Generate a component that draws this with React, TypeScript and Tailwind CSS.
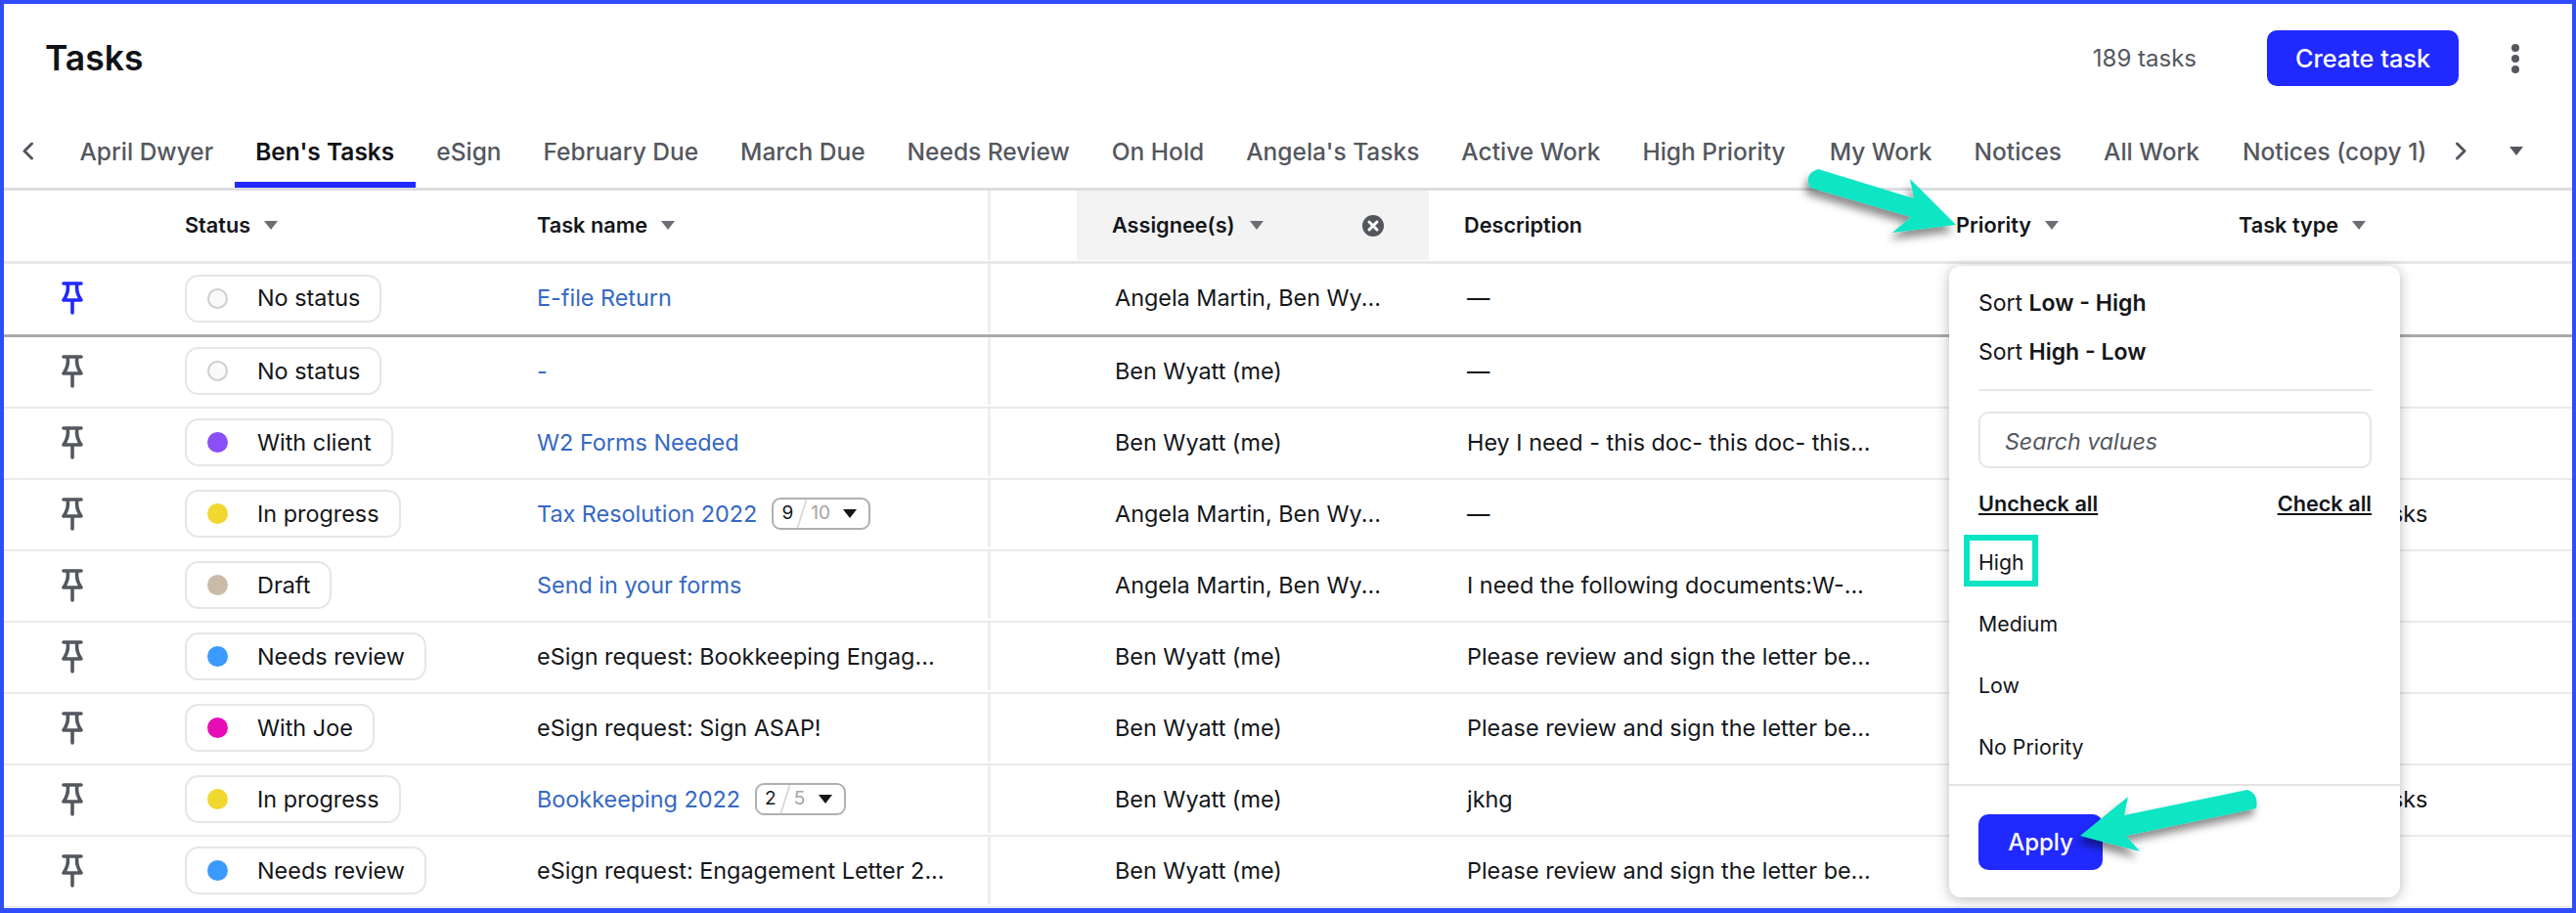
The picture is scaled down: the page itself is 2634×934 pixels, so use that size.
import React from "react";

const COLS = "grid grid-cols-[185px_360px_464px_88px_360px_503px_289px_1fr]";

function Caret({ className = "" }: { className?: string }) {
  return (
    <svg width="14" height="9" viewBox="0 0 14 9" className={`shrink-0 ${className}`}>
      <path d="M0 0H14L7 9Z" fill="currentColor" />
    </svg>
  );
}

function Pin({ blue }: { blue?: boolean }) {
  return (
    <svg width="22" height="34" viewBox="0 0 22 34" fill="none" stroke={blue ? "#2029ff" : "#54575e"} strokeWidth="3.6" strokeLinecap="round" strokeLinejoin="round">
      <path d="M2 2H20M6 2C7 7 6.5 13 2 19H20C15.5 13 15 7 16 2M11 19V32" />
    </svg>
  );
}

function Status({ label, color }: { label: string; color?: string }) {
  return (
    <div className="flex h-[49px] w-fit items-center gap-[30px] rounded-[14px] border-2 border-[#e6e6e6] pl-[21px] pr-[20px]">
      {color ? (
        <span className="h-[21px] w-[21px] rounded-full" style={{ backgroundColor: color }} />
      ) : (
        <span className="h-[21px] w-[21px] rounded-full border-2 border-[#cfcfcf] bg-[#fafafa]" />
      )}
      <span className="text-[23.4px] text-[#14161a]">{label}</span>
    </div>
  );
}

function Progress({ done, total, w }: { done: number; total: number; w: string }) {
  return (
    <div className={`ml-[15px] flex h-[33px] items-center rounded-[9px] border-2 border-[#b0b0b0] pl-[8px] text-[19px] font-normal ${w}`}>
      <span className="text-[#14161a]">{done}</span>
      <svg width="12" height="29" viewBox="0 0 12 29" className="mx-[3px] shrink-0">
        <path d="M10.5 0L1.5 29" stroke="#d4d4d4" strokeWidth="1.6" />
      </svg>
      <span className="text-[#a3a3a3]">{total}</span>
      <Caret className="ml-auto mr-[12px] text-[#14161a]" />
    </div>
  );
}

type Row = {
  label: string;
  color?: string;
  task: string;
  link?: boolean;
  progress?: [number, number, string];
  who: string;
  desc: string;
  type?: string;
};

const ANG = "Angela Martin, Ben Wy...";
const BEN = "Ben Wyatt (me)";
const SIGN = "Please review and sign the letter be...";

const rows: Row[] = [
  { label: "No status", task: "-", link: true, who: BEN, desc: "—" },
  { label: "With client", color: "#8a4ff6", task: "W2 Forms Needed", link: true, who: BEN, desc: "Hey I need - this doc- this doc- this..." },
  { label: "In progress", color: "#f0d830", task: "Tax Resolution 2022", link: true, progress: [9, 10, "w-[101px]"], who: ANG, desc: "—", type: "Internal subtasks" },
  { label: "Draft", color: "#c9bba8", task: "Send in your forms", link: true, who: ANG, desc: "I need the following documents:W-..." },
  { label: "Needs review", color: "#3b9aff", task: "eSign request: Bookkeeping Engag...", who: BEN, desc: SIGN },
  { label: "With Joe", color: "#e60db6", task: "eSign request: Sign ASAP!", who: BEN, desc: SIGN },
  { label: "In progress", color: "#f0d830", task: "Bookkeeping 2022", link: true, progress: [2, 5, "w-[93px]"], who: BEN, desc: "jkhg", type: "Internal subtasks" },
  { label: "Needs review", color: "#3b9aff", task: "eSign request: Engagement Letter 2...", who: BEN, desc: SIGN },
];

function Cells({ r, blue }: { r: Row; blue?: boolean }) {
  return (
    <>
      <div className="flex items-center pl-[59px]">
        <Pin blue={blue} />
      </div>
      <div className="flex items-center">
        <Status label={r.label} color={r.color} />
      </div>
      <div className="flex items-center border-r-[3px] border-[#eeeeee]">
        <span className={r.link ? "text-[#3568c4]" : "text-[#14161a]"}>{r.task}</span>
        {r.progress && <Progress done={r.progress[0]} total={r.progress[1]} w={r.progress[2]} />}
      </div>
      <div />
      <div className="flex items-center pl-[39px]">{r.who}</div>
      <div className="flex items-center pl-[39px]">{r.desc}</div>
      <div />
      <div className="flex items-center whitespace-nowrap pl-[41px]">{r.type}</div>
    </>
  );
}

function HeadCell({ label, caret = true }: { label: string; caret?: boolean }) {
  return (
    <div className="flex items-center gap-[14px] pl-[36px] text-[#14161a]">
      <span>{label}</span>
      {caret && <Caret className="text-[#6b6e75]" />}
    </div>
  );
}

const tabs = ["April Dwyer", "Ben's Tasks", "eSign", "February Due", "March Due", "Needs Review", "On Hold", "Angela's Tasks", "Active Work", "High Priority", "My Work", "Notices", "All Work", "Notices (copy 1)"];

export default function App() {
  return (
    <div className="relative box-border h-[934px] w-[2634px] overflow-hidden border-4 border-b-[5px] border-[#2f4dfb] bg-white font-['Inter',sans-serif] text-[23.4px] text-[#14161a]">
      {/* title bar */}
      <div className="flex h-[113px] items-center pb-[2px] pl-[42px]">
        <h1 className="text-[35.5px] font-semibold text-[#0f1216]">Tasks</h1>
        <span className="ml-auto text-[24px] text-[#54575e]">189 tasks</span>
        <button className="ml-[72px] h-[57px] w-[196px] rounded-[10px] bg-[#2029ff] text-[25.3px] font-medium text-white">Create task</button>
        <div className="ml-[54px] mr-[54px] flex flex-col gap-[3px]">
          <span className="h-[8px] w-[8px] rounded-full bg-[#54575e]" />
          <span className="h-[8px] w-[8px] rounded-full bg-[#54575e]" />
          <span className="h-[8px] w-[8px] rounded-full bg-[#54575e]" />
        </div>
      </div>

      {/* tabs */}
      <div className="flex h-[75px] items-stretch text-[24.5px] font-medium text-[#54575e]">
        <div className="flex w-[56px] items-center pl-[18px]">
          <svg width="13" height="19" viewBox="0 0 13 19" fill="none" stroke="#54575e" strokeWidth="3" strokeLinecap="round" strokeLinejoin="round">
            <path d="M10.5 2L3 9.5L10.5 17" />
          </svg>
        </div>
        {tabs.map((t, i) => (
          <div
            key={t}
            className={`flex items-center whitespace-nowrap border-y-[6px] px-[21.5px] pt-[2px] ${i === 10 ? "ml-[2px]" : ""} ${i === 13 ? "ml-[1px]" : ""} ${t === "Ben's Tasks" ? "border-b-[#2029ff] border-t-transparent font-semibold text-[#0f1216]" : "border-transparent"}`}
          >
            {t}
          </div>
        ))}
        <div className="ml-[7px] flex items-center">
          <svg width="13" height="19" viewBox="0 0 13 19" fill="none" stroke="#54575e" strokeWidth="3" strokeLinecap="round" strokeLinejoin="round">
            <path d="M2.5 2L10 9.5L2.5 17" />
          </svg>
        </div>
        <div className="ml-[43px] flex items-center">
          <Caret className="text-[#54575e]" />
        </div>
      </div>

      {/* header */}
      <div className={`${COLS} h-[78px] border-y-[3px] border-b-[#e8e8e8] border-t-[#dcdde0] pb-[1px] text-[21.7px] font-semibold`}>
        <div />
        <div className="flex items-center gap-[14px]">
          <span>Status</span>
          <Caret className="text-[#6b6e75]" />
        </div>
        <div className="flex items-center gap-[14px] border-r-[3px] border-[#eeeeee]">
          <span>Task name</span>
          <Caret className="text-[#6b6e75]" />
        </div>
        <div />
        <div className="flex items-center gap-[15px] bg-[#f3f3f4] pl-[36px] pr-[46px]">
          <span>Assignee(s)</span>
          <Caret className="text-[#6b6e75]" />
          <svg width="22" height="22" viewBox="0 0 22 22" className="ml-auto">
            <circle cx="11" cy="11" r="11" fill="#54575e" />
            <path d="M7 7L15 15M15 7L7 15" stroke="#fff" strokeWidth="3" strokeLinecap="round" />
          </svg>
        </div>
        <HeadCell label="Description" caret={false} />
        <HeadCell label="Priority" />
        <HeadCell label="Task type" />
      </div>

      {/* pinned row */}
      <div className={`${COLS} h-[75px] border-b-[3px] border-[#aaaaaa] pb-[2px]`}>
        <Cells blue r={{ label: "No status", task: "E-file Return", link: true, who: ANG, desc: "—" }} />
      </div>

      {/* rows */}
      {rows.map((r, i) => (
        <div key={i} className={`${COLS} h-[73px] border-b-2 border-[#eaeaea] pb-[2px]`}>
          <Cells r={r} />
        </div>
      ))}

      {/* filter popover */}
      <div className="absolute left-[1989px] top-[268px] h-[646px] w-[461px] rounded-[12px] bg-white shadow-[0_2px_14px_rgba(0,0,0,0.28)]">
        <div className="pl-[30px] pr-[29px] pt-[13px] text-[23px] text-[#14161a]">
          <div className="flex h-[50px] items-center">
            <span>Sort&nbsp;</span>
            <b className="font-semibold">Low - High</b>
          </div>
          <div className="flex h-[50px] items-center">
            <span>Sort&nbsp;</span>
            <b className="font-semibold">High - Low</b>
          </div>
          <div className="mt-[13px] h-[2px] bg-[#e6e6e6]" />
          <div className="mt-[21px] flex h-[58px] items-center rounded-[10px] border-2 border-[#e6e6e6] pl-[25px] pt-[4px] text-[23.2px] italic text-[#54575e]">Search values</div>
          <div className="mt-[21px] flex h-[30px] items-center justify-between text-[21.7px] font-semibold">
            <span className="underline">Uncheck all</span>
            <span className="underline">Check all</span>
          </div>
          <div className="mt-[14px] text-[21.3px]">
            <div className="flex h-[63px] items-center">High</div>
            <div className="flex h-[63px] items-center">Medium</div>
            <div className="flex h-[63px] items-center">Low</div>
            <div className="flex h-[63px] items-center">No Priority</div>
          </div>
        </div>
        <div className="mt-[6px] h-[2px] bg-[#e3e3e3]" />
        <div className="px-[30px] pt-[29px]">
          <button className="h-[57px] w-[127px] rounded-[10px] bg-[#2029ff] text-[24px] font-medium text-white">Apply</button>
        </div>
      </div>

      {/* annotations */}
      <div className="absolute left-[2004px] top-[543px] h-[53px] w-[76px] border-[6px] border-[#0be5c4]" />
      <svg width="2634" height="934" viewBox="0 0 2634 934" className="pointer-events-none absolute left-[-4px] top-[-4px]">
        <defs>
          <filter id="s" x="-20%" y="-20%" width="140%" height="150%">
            <feDropShadow dx="-3" dy="7" stdDeviation="4" floodColor="#000" floodOpacity="0.45" />
          </filter>
        </defs>
        <g fill="#0be5c4" filter="url(#s)">
          <path d="M1859 173L1957 203L1953 183L2000 230L1935 238L1954 222L1851 192Q1844 178 1859 173Z" />
          <path d="M2127 855L2176 815L2172 834L2298 808Q2310 812 2307 827L2174 855L2188 871Z" />
        </g>
      </svg>
    </div>
  );
}
